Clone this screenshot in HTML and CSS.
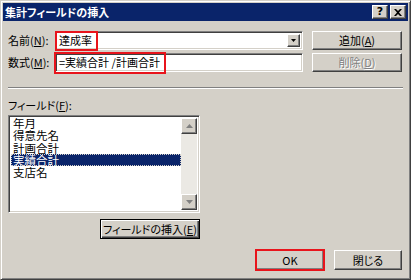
FILE: index.html
```html
<html>
<head>
  <meta charset="UTF-8">
  <meta name="viewport" content="width=device-width, initial-scale=1">
  <link rel="stylesheet" href="styles.css">
</head>
<body>
  <div class="window">
    <div class="titlebar">
      <span class="title">集計フィールドの挿入</span>
      <div class="caps">
        <span class="cap">?</span>
        <span class="cap cap-close">
          <svg width="8" height="7" viewBox="0 0 8 7"><path d="M0 0h2l2 2 2-2h2L5 3.5 8 7H6L4 5 2 7H0l3-3.5z" fill="#000"/></svg>
        </span>
      </div>
    </div>

    <div class="content">
      <div class="top">
        <label class="lbl">名前(<u>N</u>):</label>
        <div class="combo">
          <span class="val">達成率</span>
          <span class="drop">
            <svg width="5" height="3" viewBox="0 0 5 3"><path d="M0 0h5L2.5 3z" fill="#000"/></svg>
          </span>
          <span class="mark mark-name"></span>
        </div>
        <button class="btn side-btn">追加(<u>A</u>)</button>

        <label class="lbl">数式(<u>M</u>):</label>
        <div class="edit">
          <span class="val">=実績合計 /計画合計</span>
          <span class="mark mark-formula"></span>
        </div>
        <button class="btn side-btn" disabled>削除(<u>D</u>)</button>
      </div>

      <div class="sep"></div>

      <div class="lbl fields-lbl">フィールド(<u>F</u>):</div>
      <div class="fields-col">
        <div class="list">
          <ul class="items">
            <li>年月</li>
            <li>得意先名</li>
            <li>計画合計</li>
            <li class="sel">実績合計</li>
            <li>支店名</li>
          </ul>
          <div class="scroll">
            <span class="arrow">
              <svg width="7" height="4" viewBox="0 0 7 4"><path d="M3.5 0L7 4H0z" fill="#808080"/></svg>
            </span>
            <span class="track"></span>
            <span class="arrow">
              <svg width="7" height="4" viewBox="0 0 7 4"><path d="M0 0h7L3.5 4z" fill="#808080"/></svg>
            </span>
          </div>
        </div>
        <button class="btn btn-default insert-btn">フィールドの挿入(<u>E</u>)</button>
      </div>

      <div class="footer">
        <div class="ok-wrap">
          <button class="btn foot-btn">OK</button>
          <span class="mark mark-ok"></span>
        </div>
        <button class="btn foot-btn">閉じる</button>
      </div>
    </div>
  </div>
</body>
</html>
```

FILE: styles.css
```css
body {
  margin: 0;
  padding: 0;
  background: #fff;
}

.window {
  box-sizing: border-box;
  width: 411px;
  height: 280px;
  background: #d4d0c8;
  border: 1px solid;
  border-color: #d4d0c8 #404040 #404040 #d4d0c8;
  box-shadow: inset 1px 1px #fff, inset -1px -1px #808080;
  padding: 2px;
  font-family: "Noto Sans CJK JP", sans-serif;
  font-size: 11px;
  color: #000;
  font-feature-settings: "palt";
}

.titlebar {
  height: 18px;
  background: #0a246a;
  display: flex;
  align-items: center;
  justify-content: space-between;
  padding: 0 2px 0 2px;
}

.title {
  color: #fff;
  font-weight: bold;
  font-size: 11px;
  line-height: 18px;
}

.caps {
  display: flex;
  gap: 2px;
}

.cap {
  box-sizing: border-box;
  width: 16px;
  height: 14px;
  background: #d4d0c8;
  border: 1px solid;
  border-color: #fff #404040 #404040 #fff;
  box-shadow: inset -1px -1px #808080;
  display: flex;
  align-items: center;
  justify-content: center;
  font-family: "DejaVu Sans", sans-serif;
  font-weight: bold;
  font-size: 11px;
  line-height: 12px;
}

.content {
  padding: 10px 6px 0 5px;
}

.top {
  display: grid;
  grid-template-columns: 47px 248px 1fr;
  grid-template-rows: 19px 19px;
  row-gap: 3px;
  align-items: center;
}

.lbl {
  line-height: 13px;
  white-space: nowrap;
}

.combo,
.edit {
  position: relative;
  box-sizing: border-box;
  height: 19px;
  background: #fff;
  border: 1px solid;
  border-color: #808080 #fff #fff #808080;
  box-shadow: inset 1px 1px #404040, inset -1px -1px #d4d0c8;
  display: flex;
  align-items: center;
  padding-left: 3px;
}

.val {
  line-height: 13px;
  white-space: nowrap;
}

.drop {
  position: absolute;
  right: 2px;
  top: 2px;
  box-sizing: border-box;
  width: 13px;
  height: 13px;
  background: #d4d0c8;
  border: 1px solid;
  border-color: #fff #404040 #404040 #fff;
  box-shadow: inset -1px -1px #808080;
  display: flex;
  align-items: center;
  justify-content: center;
}

.mark {
  position: absolute;
  box-sizing: border-box;
  border: 2px solid #e8141c;
  pointer-events: none;
}

.mark-name {
  left: -1px;
  top: -1px;
  width: 43px;
  height: 20px;
}

.mark-formula {
  left: -2px;
  top: -2px;
  width: 112px;
  height: 22px;
}

.btn {
  box-sizing: border-box;
  background: #d4d0c8;
  border: 1px solid;
  border-color: #fff #404040 #404040 #fff;
  box-shadow: inset -1px -1px #808080;
  font-family: "Noto Sans CJK JP", sans-serif;
  font-size: 11px;
  font-feature-settings: "palt";
  line-height: 13px;
  color: #000;
  padding: 0;
  margin: 0;
}

.btn[disabled] {
  color: #808080;
  text-shadow: 1px 1px #fff;
}

.side-btn {
  justify-self: end;
  width: 90px;
  height: 19px;
}

.sep {
  margin-top: 15px;
  height: 0;
  border-top: 1px solid #808080;
  border-bottom: 1px solid #fff;
  margin-right: -1px;
}

.fields-lbl {
  margin-top: 10px;
}

.fields-col {
  width: 192px;
  display: flex;
  flex-direction: column;
  align-items: flex-end;
  margin-top: 3px;
}

.list {
  box-sizing: border-box;
  width: 192px;
  height: 98px;
  background: #fff;
  border: 1px solid;
  border-color: #808080 #fff #fff #808080;
  box-shadow: inset 1px 1px #404040, inset -1px -1px #d4d0c8;
  padding: 1px 2px 2px 2px;
  display: flex;
}

.items {
  flex: 1;
  list-style: none;
  margin: 0;
  padding: 0;
  font-size: 11.5px;
}

.items li {
  line-height: 12.3px;
  height: 12.3px;
  padding-left: 2px;
  white-space: nowrap;
}

.items .sel {
  background: #0a246a;
  color: #fff;
  outline: 1px dotted #d4d0c8;
  outline-offset: -1px;
}

.scroll {
  width: 16px;
  margin-top: 1px;
  display: flex;
  flex-direction: column;
  background: #ebe9e4;
}

.arrow {
  box-sizing: border-box;
  width: 16px;
  height: 16px;
  background: #d4d0c8;
  border: 1px solid;
  border-color: #fff #404040 #404040 #fff;
  box-shadow: inset -1px -1px #808080;
  display: flex;
  align-items: center;
  justify-content: center;
}

.track {
  flex: 1;
}

.btn-default {
  border: 1px solid #000;
  box-shadow: inset 1px 1px #fff, inset -1px -1px #404040, inset -2px -2px #808080;
}

.insert-btn {
  width: 100px;
  height: 20px;
  margin-top: 6px;
}

.footer {
  display: flex;
  justify-content: flex-end;
  gap: 10px;
  margin-top: 11px;
}

.ok-wrap {
  position: relative;
  display: flex;
}

.foot-btn {
  width: 68px;
  height: 20px;
}

.mark-ok {
  left: -1px;
  top: -1px;
  width: 70px;
  height: 22px;
}
```
